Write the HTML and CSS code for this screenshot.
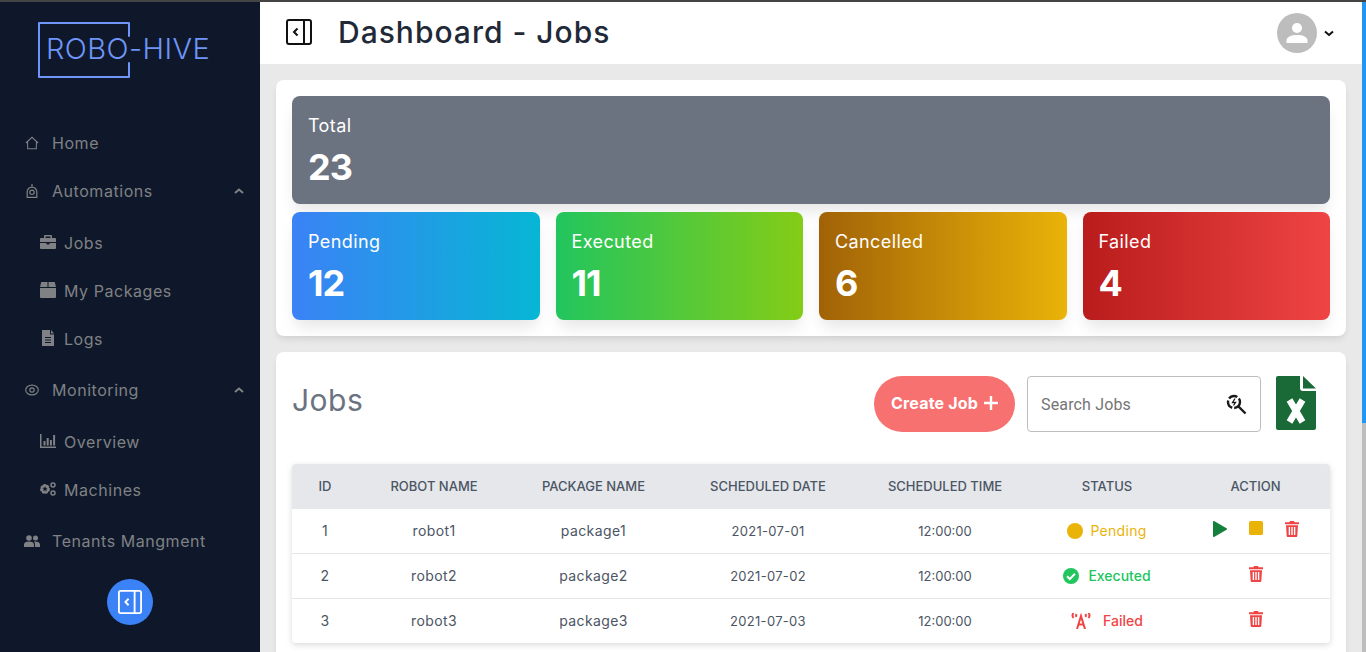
FILE: index.html
```html
<!DOCTYPE html>
<html>
<head>
    <title>Dashboard - Jobs</title>
    <link rel="stylesheet" href="styles.css">
</head>
<body>
    <svg class="sprite" width="0" height="0">
        <symbol id="trash" viewBox="0 0 14 16">
            <path d="M5 0h4l.6 1.2H14v2H0v-2h4.4z"/>
            <path fill-rule="evenodd" d="M1 4.2h12L12.3 15a1 1 0 0 1-1 1H2.7a1 1 0 0 1-1-1zM3.7 6v8h1.4V6zm2.6 0v8h1.4V6zm2.6 0v8h1.4V6z"/>
        </symbol>
        <symbol id="panel" viewBox="0 0 26 26">
            <rect x="1" y="1" width="24" height="24" rx="2" fill="none" stroke="currentColor" stroke-width="2"/>
            <path d="M18 1v24" stroke="currentColor" stroke-width="2"/>
            <path d="M11.5 9.5 8 13l3.5 3.5" fill="none" stroke="currentColor" stroke-width="2"/>
        </symbol>
    </svg>

    <div class="app">
        <aside class="sidebar">
            <div class="logo">
                <svg class="logo-frame" width="92" height="56" viewBox="0 0 92 56">
                    <path d="M91 14V1H1v54h90V41" fill="none" stroke="#6f95f8" stroke-width="2" stroke-linejoin="round" stroke-linecap="round"/>
                </svg>
                <span class="logo-text">ROBO-HIVE</span>
            </div>
            <nav class="nav">
                <a class="nav-item">
                    <svg class="nav-icon" viewBox="0 0 16 16" fill="none" stroke="currentColor" stroke-width="1.2"><path d="M1 8 8 1.5 15 8M3 6.5V14.500h10V6.500"/></svg>
                    Home
                </a>
                <a class="nav-item">
                    <svg class="nav-icon" viewBox="0 0 16 16" fill="none" stroke="currentColor" stroke-width="1.4"><path d="M8 0v3"/><path d="M2.500 15.300V9a5.500 5.500 0 0 1 11 0v6.300z"/><circle cx="8" cy="9.500" r="2.500"/></svg>
                    Automations
                    <svg class="caret" viewBox="0 0 10 6"><path d="M1 5l4-3.500L9 5" fill="none" stroke="currentColor" stroke-width="2"/></svg>
                </a>
                <div class="sub-nav">
                    <a class="sub-item">
                        <svg class="sub-icon" viewBox="0 0 16 14" fill="currentColor"><path d="M5 0h6a1 1 0 0 1 1 1v2h3a1 1 0 0 1 1 1v3H0V4a1 1 0 0 1 1-1h3V1a1 1 0 0 1 1-1zm.5 1.500V3h5V1.500z"/><path d="M0 8h6.500v1.500h3V8H16v5a1 1 0 0 1-1 1H1a1 1 0 0 1-1-1z"/></svg>
                        Jobs
                    </a>
                    <a class="sub-item">
                        <svg class="sub-icon" viewBox="0 0 16 16" fill="currentColor"><path d="M2.500 0h5v5H0l1-4a1 1 0 0 1 1.500-1zM8.500 0h5a1 1 0 0 1 1.500 1l1 4H8.500zM0 6h16v9a1 1 0 0 1-1 1H1a1 1 0 0 1-1-1z"/></svg>
                        My Packages
                    </a>
                    <a class="sub-item">
                        <svg class="sub-icon" viewBox="0 0 16 16" fill="currentColor"><path fill-rule="evenodd" d="M2 0h8v4.500h4V16H2zM5 7v1h6V7zm0 2.500v1h6v-1zm0 2.500v1h6v-1z"/><path d="M11 0l3 3.500h-3z"/></svg>
                        Logs
                    </a>
                </div>
                <a class="nav-item nav-monitoring">
                    <svg class="nav-icon" viewBox="0 0 16 16" fill="none" stroke="currentColor" stroke-width="1.3"><ellipse cx="8" cy="8" rx="7.200" ry="5.600"/><circle cx="8" cy="8" r="2.500"/></svg>
                    Monitoring
                    <svg class="caret" viewBox="0 0 10 6"><path d="M1 5l4-3.500L9 5" fill="none" stroke="currentColor" stroke-width="2"/></svg>
                </a>
                <div class="sub-nav">
                    <a class="sub-item">
                        <svg class="sub-icon" viewBox="0 0 16 14" fill="currentColor"><path d="M0 0h1.500v12.500H16V14H0zM3.500 7h2v4.500h-2zM6.700 4h2v7.500h-2zM9.900 6h2v5.500h-2zM13.100 1h2v10.500h-2z"/></svg>
                        Overview
                    </a>
                    <a class="sub-item">
                        <svg class="sub-icon" viewBox="0 0 16 14">
                            <circle cx="5" cy="7" r="3.200" fill="none" stroke="currentColor" stroke-width="3.400" stroke-dasharray="1.800 .9"/>
                            <circle cx="5" cy="7" r="3.400" fill="none" stroke="currentColor" stroke-width="2"/>
                            <circle cx="13" cy="3" r="2" fill="none" stroke="currentColor" stroke-width="1.500"/>
                            <circle cx="13" cy="11" r="2" fill="none" stroke="currentColor" stroke-width="1.500"/>
                        </svg>
                        Machines
                    </a>
                </div>
                <a class="nav-item nav-tenants">
                    <svg class="nav-icon wide" viewBox="0 0 16 12" fill="currentColor"><circle cx="5" cy="3" r="2.800"/><circle cx="11.500" cy="3" r="2.500"/><path d="M0 12V9.500C0 7.500 2 6.500 5 6.500s5 1 5 3V12zM11 12V9c0-1-.5-1.800-1.200-2.500 3-.5 6.200.5 6.200 3V12z"/></svg>
                    Tenants Mangment
                </a>
            </nav>
            <button class="collapse-btn">
                <svg width="24" height="24"><use href="#panel"/></svg>
            </button>
        </aside>

        <main class="main">
            <header class="topbar">
                <svg class="topbar-toggle" width="26" height="26"><use href="#panel"/></svg>
                <h1 class="page-title">Dashboard - Jobs</h1>
                <div class="user">
                    <div class="avatar">
                        <svg width="24" height="24" viewBox="0 0 24 24" fill="#fff"><circle cx="12" cy="7" r="5"/><path d="M1.500 22v-2.500C1.500 16 6 14 12 14s10.500 2 10.500 5.500V22z"/></svg>
                    </div>
                    <svg width="10" height="7" viewBox="0 0 10 7"><path d="M1 1.500l4 3.500 4-3.500" fill="none" stroke="#111" stroke-width="2"/></svg>
                </div>
            </header>

            <div class="content">
                <section class="card">
                    <div class="stat stat-total">
                        <div class="stat-label">Total</div>
                        <div class="stat-value">23</div>
                    </div>
                    <div class="stat-row">
                        <div class="stat stat-pending">
                            <div class="stat-label">Pending</div>
                            <div class="stat-value">12</div>
                        </div>
                        <div class="stat stat-executed">
                            <div class="stat-label">Executed</div>
                            <div class="stat-value">11</div>
                        </div>
                        <div class="stat stat-cancelled">
                            <div class="stat-label">Cancelled</div>
                            <div class="stat-value">6</div>
                        </div>
                        <div class="stat stat-failed">
                            <div class="stat-label">Failed</div>
                            <div class="stat-value">4</div>
                        </div>
                    </div>
                </section>

                <section class="card jobs-card">
                    <div class="jobs-head">
                        <h2 class="jobs-title">Jobs</h2>
                        <button class="create-btn">Create Job
                            <svg width="14" height="14" viewBox="0 0 14 14"><path d="M7 0v14M0 7h14" stroke="#fff" stroke-width="2.400"/></svg>
                        </button>
                        <div class="search">
                            <input type="text" placeholder="Search Jobs">
                            <svg width="21" height="21" viewBox="0 0 21 21" fill="none" stroke="#1a1a1a">
                                <circle cx="8" cy="8" r="6" stroke-width="2.400" stroke-dasharray="9 2"/>
                                <path d="M9 4.500 6.500 8.500h3L7.500 11.500" stroke-width="1.300"/>
                                <path d="M12.500 12.500 19.500 19.500" stroke-width="2.400"/>
                            </svg>
                        </div>
                        <svg class="excel" width="40" height="54" viewBox="0 0 40 54">
                            <path d="M2 0h22v12a3 3 0 0 0 3 3h13v37a2 2 0 0 1-2 2H2a2 2 0 0 1-2-2V2a2 2 0 0 1 2-2z" fill="#1a6a38"/>
                            <path d="M27 0l13 12.500H27z" fill="#1a6a38"/>
                            <path d="M13.500 24 26.500 46M26.500 24 13.500 46" stroke="#fff" stroke-width="6.500"/>
                        </svg>
                    </div>

                    <div class="table-wrap">
                        <table class="jobs-table">
                            <thead>
                                <tr>
                                    <th class="col-id">ID</th>
                                    <th class="col-robot">Robot Name</th>
                                    <th class="col-package">Package Name</th>
                                    <th class="col-date">Scheduled Date</th>
                                    <th class="col-time">Scheduled Time</th>
                                    <th class="col-status">Status</th>
                                    <th class="col-action">Action</th>
                                </tr>
                            </thead>
                            <tbody>
                                <tr>
                                    <td>1</td>
                                    <td>robot1</td>
                                    <td>package1</td>
                                    <td class="cell-date">2021-07-01</td>
                                    <td class="cell-time">12:00:00</td>
                                    <td>
                                        <span class="status pending">
                                            <svg width="16" height="16" viewBox="0 0 16 16"><circle cx="8" cy="8" r="8" fill="currentColor"/></svg>
                                            Pending
                                        </span>
                                    </td>
                                    <td class="col-action">
                                        <div class="actions">
                                            <svg class="act-play" width="14" height="16" viewBox="0 0 14 16"><path d="M0 1a1 1 0 0 1 1.500-.8L13.500 7.200a1 1 0 0 1 0 1.600L1.500 15.800A1 1 0 0 1 0 15z"/></svg>
                                            <svg class="act-stop" width="14" height="14" viewBox="0 0 14 14"><rect width="14" height="14" rx="1.500"/></svg>
                                            <svg class="act-trash" width="14" height="16"><use href="#trash"/></svg>
                                        </div>
                                    </td>
                                </tr>
                                <tr>
                                    <td>2</td>
                                    <td>robot2</td>
                                    <td>package2</td>
                                    <td class="cell-date">2021-07-02</td>
                                    <td class="cell-time">12:00:00</td>
                                    <td>
                                        <span class="status executed">
                                            <svg width="16" height="16" viewBox="0 0 16 16"><circle cx="8" cy="8" r="8" fill="currentColor"/><path d="M4 8.300l2.800 2.700L12 5.800" fill="none" stroke="#fff" stroke-width="2"/></svg>
                                            Executed
                                        </span>
                                    </td>
                                    <td class="col-action">
                                        <div class="actions">
                                            <svg class="act-trash" width="14" height="16"><use href="#trash"/></svg>
                                        </div>
                                    </td>
                                </tr>
                                <tr>
                                    <td>3</td>
                                    <td>robot3</td>
                                    <td>package3</td>
                                    <td class="cell-date">2021-07-03</td>
                                    <td class="cell-time">12:00:00</td>
                                    <td>
                                        <span class="status failed">
                                            <svg width="20" height="16" viewBox="0 0 20 16" fill="none" stroke="currentColor" stroke-width="2"><path d="M2.500 0C1.300 1.500 1.300 3.500 2.500 5M17.500 0c1.200 1.500 1.200 3.500 0 5M5.500 1C5 2 5 3 5.500 4M14.500 1c.5 1 .5 2 0 3"/><path d="M6 16 10 3l4 13M7.500 11.500h5"/></svg>
                                            Failed
                                        </span>
                                    </td>
                                    <td class="col-action">
                                        <div class="actions">
                                            <svg class="act-trash" width="14" height="16"><use href="#trash"/></svg>
                                        </div>
                                    </td>
                                </tr>
                            </tbody>
                        </table>
                    </div>
                </section>
            </div>
        </main>

        <div class="scrollbar"><div class="scrollbar-thumb"></div></div>
    </div>
</body>
</html>
```

FILE: styles.css
```css
html, body {
    height: 100%;
    margin: 0;
}
body {
    font-family: Inter, "Noto Sans", sans-serif;
    background: #e9e9e9;
    overflow: hidden;
}
.sprite {
    display: block;
    height: 0;
}
.app {
    display: flex;
    height: calc(100vh - 2px);
    border-top: 2px solid #444;
}

/* sidebar */
.sidebar {
    width: 260px;
    flex-shrink: 0;
    display: flex;
    flex-direction: column;
    background: #0e182a;
    color: #808184;
}
.logo {
    display: grid;
    height: 117px;
    padding: 20px 0 0 38px;
    box-sizing: border-box;
}
.logo-frame, .logo-text {
    grid-area: 1 / 1;
}
.logo-text {
    margin: 11px 0 0 8px;
    font-size: 29px;
    line-height: 32px;
    font-weight: 300;
    letter-spacing: 0.45px;
    color: #6f95f8;
}
.nav {
    display: flex;
    flex-direction: column;
}
.nav-item, .sub-item {
    display: flex;
    align-items: center;
    height: 48px;
    font-size: 16px;
    letter-spacing: 0.55px;
}
.nav-item {
    padding: 0 16px 0 25px;
}
.nav-icon {
    width: 14px;
    height: 14px;
    margin-right: 13px;
}
.nav-icon.wide {
    width: 16px;
    height: 12px;
    margin: 0 12px 0 -1px;
}
.caret {
    width: 10px;
    height: 6px;
    margin-left: auto;
}
.sub-nav {
    margin-top: 4px;
}
.sub-item {
    padding-left: 40px;
}
.sub-icon {
    width: 16px;
    height: 16px;
    margin-right: 8px;
    margin-top: -2px;
    flex-shrink: 0;
}
.nav-monitoring {
    margin-top: 3px;
}
.nav-tenants {
    margin-top: 3px;
}
.collapse-btn {
    width: 46px;
    height: 46px;
    margin: 14px auto 0;
    padding: 0;
    border: none;
    border-radius: 50%;
    background: #3b82f6;
    color: #fff;
    display: flex;
    align-items: center;
    justify-content: center;
}

/* main area */
.main {
    flex: 1;
    min-width: 0;
    overflow: hidden;
}
.scrollbar {
    width: 4px;
    flex-shrink: 0;
    background: #bdbdbd;
}
.scrollbar-thumb {
    height: 421px;
    background: #2196f3;
}
.topbar {
    display: flex;
    align-items: center;
    height: 62px;
    padding: 0 28px 0 26px;
    background: #fff;
}
.topbar-toggle {
    color: #111;
    margin: 0 26px 2px 0;
}
.page-title {
    margin: 0 0 2px;
    font-size: 30px;
    font-weight: 500;
    letter-spacing: 1px;
    color: #1f2937;
}
.user {
    display: flex;
    align-items: center;
    gap: 7px;
    margin-left: auto;
}
.avatar {
    width: 40px;
    height: 40px;
    border-radius: 50%;
    background: #bdbdbd;
    display: flex;
    align-items: center;
    justify-content: center;
}
.content {
    display: flex;
    flex-direction: column;
    gap: 16px;
    padding: 16px;
}
.card {
    background: #fff;
    border-radius: 8px;
    padding: 16px;
    box-shadow: 0 4px 6px -1px rgba(0, 0, 0, 0.1);
}

/* stats */
.stat {
    height: 108px;
    box-sizing: border-box;
    padding: 16px;
    border-radius: 8px;
    color: #fff;
    box-shadow: 0 10px 15px -3px rgba(0, 0, 0, 0.1);
}
.stat-label {
    font-size: 18px;
    line-height: 27px;
    letter-spacing: 0.4px;
}
.stat-value {
    margin-top: 3px;
    font-size: 36px;
    line-height: 50px;
    font-weight: 700;
    letter-spacing: -1px;
}
.stat-row {
    display: grid;
    grid-template-columns: repeat(4, 1fr);
    gap: 16px;
    margin-top: 8px;
}
.stat-total {
    background: #6b7280;
}
.stat-pending {
    background: linear-gradient(to right, #3b82f6, #06b6d4);
}
.stat-executed {
    background: linear-gradient(to right, #22c55e, #84cc16);
}
.stat-cancelled {
    background: linear-gradient(to right, #a16207, #eab308);
}
.stat-failed {
    background: linear-gradient(to right, #b91c1c, #ef4444);
}

/* jobs */
.jobs-card {
    min-height: 638px;
    box-sizing: border-box;
    padding-top: 24px;
}
.jobs-head {
    display: flex;
    align-items: flex-start;
    margin-bottom: 32px;
}
.jobs-title {
    margin: 0 auto 0 0;
    font-size: 30px;
    line-height: 48px;
    font-weight: 400;
    letter-spacing: 0.5px;
    color: #6b7280;
}
.create-btn {
    display: flex;
    align-items: center;
    justify-content: center;
    gap: 6px;
    width: 141px;
    height: 56px;
    padding: 0 0 2px;
    border: none;
    border-radius: 28px;
    background: #f87171;
    color: #fff;
    font-family: Inter, sans-serif;
    font-size: 16px;
    font-weight: 700;
    letter-spacing: 0.2px;
}
.search {
    display: flex;
    align-items: center;
    width: 234px;
    height: 56px;
    box-sizing: border-box;
    margin-left: 12px;
    padding: 0 13px;
    border: 1px solid #bdbdbd;
    border-radius: 4px;
}
.search input {
    flex: 1;
    min-width: 0;
    border: none;
    outline: none;
    padding: 0;
    font-family: Roboto, sans-serif;
    font-size: 16px;
    letter-spacing: 0.15px;
}
.search input::placeholder {
    color: #757575;
}
.excel {
    margin: 0 14px 0 15px;
}
.table-wrap {
    border-radius: 4px;
    overflow: hidden;
    box-shadow: 0 2px 6px rgba(0, 0, 0, 0.15);
}
.jobs-table {
    width: 100%;
    border-collapse: collapse;
    table-layout: fixed;
    text-align: center;
    font-size: 14px;
    letter-spacing: 0.4px;
    color: #4b5563;
}
.jobs-table th {
    height: 45px;
    padding: 0 0 2px;
    box-sizing: border-box;
    background: #e5e7eb;
    font-size: 13px;
    font-weight: 500;
    text-transform: uppercase;
    letter-spacing: 0;
}
.jobs-table td {
    height: 44px;
    padding: 0;
    border-top: 1px solid #e5e7eb;
}
.jobs-table td:nth-child(-n+3) {
    height: 42px;
    padding-bottom: 2px;
}
.jobs-table tbody tr:first-child td {
    border-top: none;
}
.jobs-table .cell-date {
    font-size: 13px;
    letter-spacing: 0.3px;
}
.jobs-table .cell-time {
    font-size: 13px;
    letter-spacing: 0;
}
.col-id { width: 66px; }
.col-robot { width: 152px; }
.col-package { width: 167px; }
.col-date { width: 182px; }
.col-time { width: 172px; }
.col-status { width: 152px; }
.jobs-table .col-action { padding-right: 2px; }

.status {
    display: inline-flex;
    align-items: center;
    gap: 7px;
    font-size: 14px;
    letter-spacing: 0.3px;
    vertical-align: -2px;
}
.status.pending { color: #eab308; }
.status.executed { color: #22c55e; gap: 9px; font-weight: 500; letter-spacing: 0; }
.status.failed { color: #ef4444; gap: 12px; font-weight: 500; letter-spacing: 0; }
.actions {
    display: flex;
    justify-content: center;
    gap: 22px;
    margin-top: -4px;
}
.act-play { fill: #15803d; }
.act-stop { fill: #eab308; }
.act-trash { fill: #ef4444; }
```
